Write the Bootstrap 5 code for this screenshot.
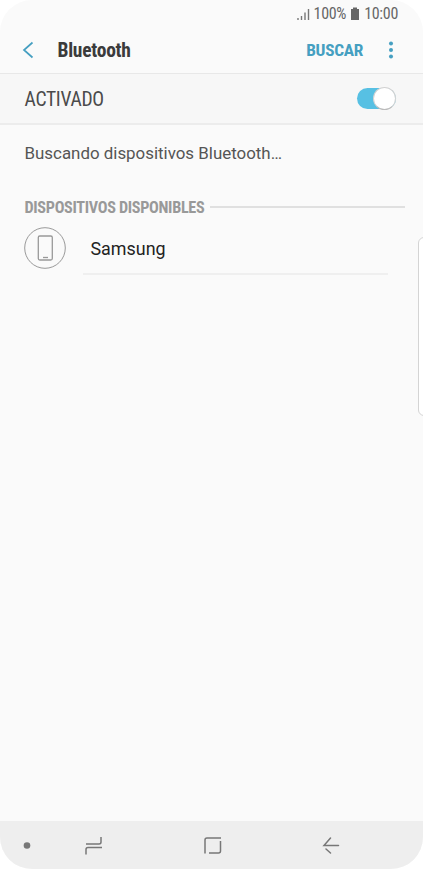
<!DOCTYPE html>
<html lang="es">
<head>
<meta charset="utf-8">
<meta name="viewport" content="width=device-width, initial-scale=1">
<title>Bluetooth</title>
<link href="https://cdn.jsdelivr.net/npm/bootstrap@5.3.0/dist/css/bootstrap.min.css" rel="stylesheet">
<style>
body { background: #fff; font-family: Roboto, "Liberation Sans", sans-serif; line-height: 1; }
.screen { height: 870px; }
.phone { width: 423px; height: 869px; background: #fafafa; border-radius: 32px; color: #4b4b4b; }
.cond { font-stretch: 75%; white-space: nowrap; }
.status { height: 26px; padding: 1px 25px 0 0; font-size: 16px; color: #666; }
.status .cond { letter-spacing: -.3px; padding-top: 1px; }
.appbar { height: 48px; padding: 1px 28px 0 22px; border-bottom: 1px solid #e8e8e8; }
.title { font-size: 19.5px; letter-spacing: -.25px; color: #3b3b3b; margin-left: 22.5px; padding-top: 1px; }
.search { font-size: 17.3px; letter-spacing: -.3px; color: #459fc1; padding-top: 1px; }
.state { height: 51px; background: #f7f7f7; border-bottom: 2px solid #ececec; padding: 0 27px 0 24.5px; }
.state .cond { font-size: 19.6px; letter-spacing: -.3px; padding-top: 3px; }
.toggle { width: 39px; height: 21px; border-radius: 11px; background: #57c0e3; }
.knob { width: 23px; height: 23px; border-radius: 50%; background: #fff; border: 1px solid #d2d2d2; border-bottom-color: #bbb; }
.msg { font-size: 16.9px; padding: 20px 24.5px 0; height: 72px; color: #555; }
.section { padding: 0 18px 0 24.5px; height: 21px; font-size: 16.2px; color: #999; }
.rule { height: 2px; background: #e0e0e0; margin: -2px 0 0 6px; }
.section .cond { padding-top: 2px; letter-spacing: -.33px; }
.device { padding: 9px 35px 0 24px; height: 57px; }
.name { font-size: 17.9px; color: #222; height: 48px; border-bottom: 2px solid #efefef; margin-left: 17px; padding: 0 0 2px 7.500px; }
.edge { top: 237px; right: -7px; width: 12px; height: 179px; border: 1px solid #d4d4d4; border-radius: 6px; background: #fff; }
.softkeys { height: 48px; background: #eee; padding: 0 83px 0 22px; }
.keys { margin-left: 53px; }
</style>
</head>
<body>
<div class="screen">
<main class="phone position-relative overflow-hidden d-flex flex-column">
  <div class="status d-flex align-items-center justify-content-end">
    <svg class="me-1" width="13" height="14" stroke="#777" stroke-width="1.4"><path d="M1 13v-2M4.500 13V9M8 13V5.500M11.500 13V2"/></svg>
    <span class="cond">100%</span>
    <svg class="mx-1" width="10" height="14" fill="#666"><path d="M3 .500h4V2h2v11H1V2h2z"/></svg>
    <span class="cond">10:00</span>
  </div>
  <header class="appbar d-flex align-items-center">
    <svg width="13" height="18" fill="none" stroke="#459fc1" stroke-width="1.700"><path d="M10.500 1.500 2 9l8.500 7.500"/></svg>
    <span class="title cond fw-bold">Bluetooth</span>
    <span class="search cond fw-bold ms-auto">BUSCAR</span>
    <svg class="ms-4" width="8" height="18" fill="#459fc1"><circle cx="4" cy="2.500" r="2"/><circle cx="4" cy="9" r="2"/><circle cx="4" cy="15.500" r="2"/></svg>
  </header>
  <div class="state d-flex align-items-center justify-content-between">
    <span class="cond">ACTIVADO</span>
    <div class="toggle d-flex align-items-center justify-content-end"><div class="knob"></div></div>
  </div>
  <div class="msg">Buscando dispositivos Bluetooth…</div>
  <div class="section d-flex align-items-center"><span class="cond fw-bold">DISPOSITIVOS DISPONIBLES</span><div class="rule flex-grow-1"></div></div>
  <div class="device d-flex">
    <svg width="42" height="42" fill="none" stroke="#999"><circle cx="21" cy="21" r="20.300"/><rect x="14.300" y="9" width="14" height="24" rx="1.500" stroke-width="1.300"/><path d="M19 30.500h5" stroke-width="1.300"/></svg>
    <div class="name d-flex align-items-center flex-grow-1">Samsung</div>
  </div>
  <div class="edge position-absolute"></div>
  <nav class="softkeys d-flex align-items-center mt-auto">
    <svg width="10" height="10" fill="#777"><circle cx="5" cy="5.500" r="3.300"/></svg>
    <div class="keys d-flex align-items-center justify-content-between flex-grow-1">
      <svg width="18" height="20" fill="none" stroke="#777" stroke-width="1.500"><path d="M1 9h13q2 0 2-2V2M17 12.500H3q-2 0-2 2v5"/></svg>
      <svg width="18" height="18" fill="none" stroke="#777" stroke-width="1.500"><path d="M17 2H3q-2 0-2 2V17.500M16.500 5v10q0 2-2 2H5"/></svg>
      <svg width="18" height="18" fill="none" stroke="#777" stroke-width="1.500" stroke-linecap="round"><path d="M16.500 9.500H2L8.500 2M4 13 8.500 17"/></svg>
    </div>
  </nav>
</main>
</div>
<script src="https://cdn.jsdelivr.net/npm/bootstrap@5.3.0/dist/js/bootstrap.bundle.min.js"></script>
</body>
</html>
